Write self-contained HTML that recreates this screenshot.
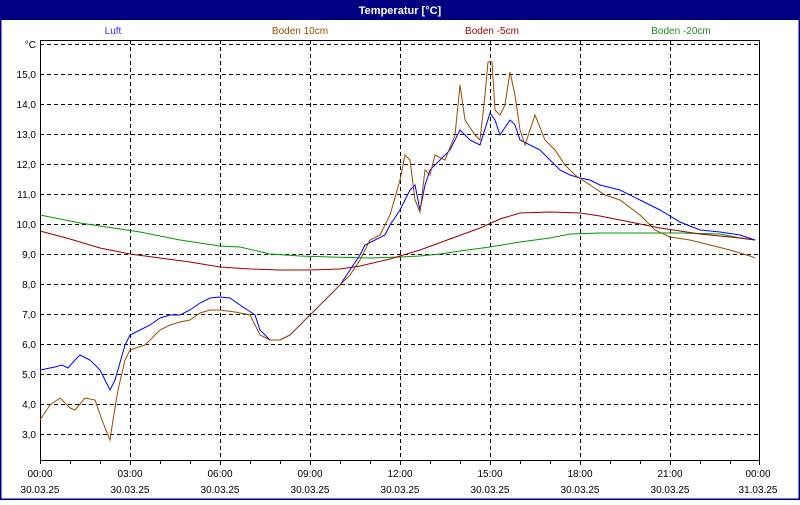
<!DOCTYPE html>
<html><head><meta charset="utf-8"><style>
body{margin:0;width:800px;height:500px;overflow:hidden;background:#fff;font-family:"Liberation Sans",sans-serif}
</style></head><body>
<svg width="800" height="500" xmlns="http://www.w3.org/2000/svg" font-family="Liberation Sans, sans-serif" font-size="10">
<rect x="0" y="0" width="800" height="500" fill="#fff"/>
<rect x="0.5" y="0.5" width="799" height="499" fill="none" stroke="#000080" stroke-width="2"/>
<rect x="0" y="0" width="800" height="20" fill="#000080"/>
<text x="400" y="14" text-anchor="middle" fill="#fff" font-weight="bold" font-size="11">Temperatur [°C]</text>
<text x="113" y="34" text-anchor="middle" fill="#3030ff">Luft</text>
<text x="300" y="34" text-anchor="middle" fill="#994c00">Boden 10cm</text>
<text x="492" y="34" text-anchor="middle" fill="#990000">Boden -5cm</text>
<text x="681" y="34" text-anchor="middle" fill="#228822">Boden -20cm</text>
<g stroke="#000" stroke-dasharray="4,3" stroke-width="1">
<path d="M40 44.5H760M40 74.5H760M40 104.5H760M40 134.5H760M40 164.5H760M40 194.5H760M40 224.5H760M40 254.5H760M40 284.5H760M40 314.5H760M40 344.5H760M40 374.5H760M40 404.5H760M40 434.5H760"/>
<path d="M130.5 40V460M220.5 40V460M310.5 40V460M400.5 40V460M490.5 40V460M580.5 40V460M670.5 40V460"/>
</g>
<path d="M40.5 40V464M40 40.5H760M759.5 40V460M40 460.5H760" stroke="#000" fill="none"/>
<path d="M70.5 460v4M100.5 460v4M130.5 460v5M160.5 460v4M190.5 460v4M220.5 460v5M250.5 460v4M280.5 460v4M310.5 460v5M340.5 460v4M370.5 460v4M400.5 460v5M430.5 460v4M460.5 460v4M490.5 460v5M520.5 460v4M550.5 460v4M580.5 460v5M610.5 460v4M640.5 460v4M670.5 460v5M700.5 460v4M730.5 460v4M759.5 460v5" stroke="#000"/>
<g text-anchor="end">
<text x="36" y="48">°C</text><text x="36" y="78">15,0</text><text x="36" y="108">14,0</text><text x="36" y="138">13,0</text><text x="36" y="168">12,0</text><text x="36" y="198">11,0</text><text x="36" y="228">10,0</text><text x="36" y="258">9,0</text><text x="36" y="288">8,0</text><text x="36" y="318">7,0</text><text x="36" y="348">6,0</text><text x="36" y="378">5,0</text><text x="36" y="408">4,0</text><text x="36" y="438">3,0</text>
</g>
<g text-anchor="middle">
<text x="40" y="477">00:00</text><text x="40" y="493">30.03.25</text>
<text x="130" y="477">03:00</text><text x="130" y="493">30.03.25</text>
<text x="220" y="477">06:00</text><text x="220" y="493">30.03.25</text>
<text x="310" y="477">09:00</text><text x="310" y="493">30.03.25</text>
<text x="400" y="477">12:00</text><text x="400" y="493">30.03.25</text>
<text x="490" y="477">15:00</text><text x="490" y="493">30.03.25</text>
<text x="580" y="477">18:00</text><text x="580" y="493">30.03.25</text>
<text x="670" y="477">21:00</text><text x="670" y="493">30.03.25</text>
<text x="758" y="477">00:00</text><text x="758" y="493">31.03.25</text>
</g>
<g fill="none" stroke-width="1">
<polyline stroke="#009900" points="40,215 60,219 80,223 100,226 120,229 140,232 160,236 180,240 200,243 220,246 240,247 270,254 300,256 330,257 370,258 400,257 420,256 440,254 460,251 490,247 520,242 550,238 570,234 600,233 640,233 680,233 720,234 740,238 755,240"/>
<polyline stroke="#990000" points="40,231 70,239 100,248 130,254 160,258 190,262 220,267 250,269 280,270 310,270 340,269 360,266 390,259 420,250 450,239 480,228 500,219 520,213 550,212 580,213 600,216 630,222 660,228 700,234 740,238 755,240"/>
<polyline stroke="#0000ff" points="40,370 55,367 62,365 68,368 75,360 80,355 90,360 100,370 110,390 115,380 125,345 130,335 140,330 150,325 160,318 170,315 180,315 190,310 200,303 210,298 220,297 230,298 240,305 255,315 260,330 270,340 280,340 290,335 300,325 310,315 320,305 330,295 340,285 350,270 360,255 365,245 375,240 385,235 390,225 400,210 405,200 410,190 415,185 420,210 425,185 430,170 440,160 450,150 460,130 470,140 480,145 490,113 495,120 500,135 510,120 515,125 520,140 530,145 540,150 550,160 560,170 570,175 580,178 590,180 600,185 620,190 640,200 660,210 680,222 700,230 720,232 740,235 755,240"/>
<polyline stroke="#994c00" points="40,420 50,405 60,398 70,408 75,410 85,398 95,400 102,420 110,440 113,420 118,390 125,360 130,350 145,345 160,330 170,325 180,322 190,320 200,313 210,310 220,310 235,312 250,315 260,335 270,340 280,340 290,335 300,325 310,315 320,305 330,295 340,285 350,275 360,260 370,240 380,235 390,215 400,180 405,155 410,160 415,200 420,212 425,170 430,175 435,155 445,160 455,135 460,85 465,120 475,135 480,140 485,95 488,62 492,62 495,110 500,115 505,105 510,72 515,95 520,130 525,145 535,115 545,140 555,150 565,165 575,175 590,185 605,195 620,200 640,215 655,230 670,237 690,240 710,245 730,250 750,256 755,258"/>
</g>
</svg>
</body></html>
